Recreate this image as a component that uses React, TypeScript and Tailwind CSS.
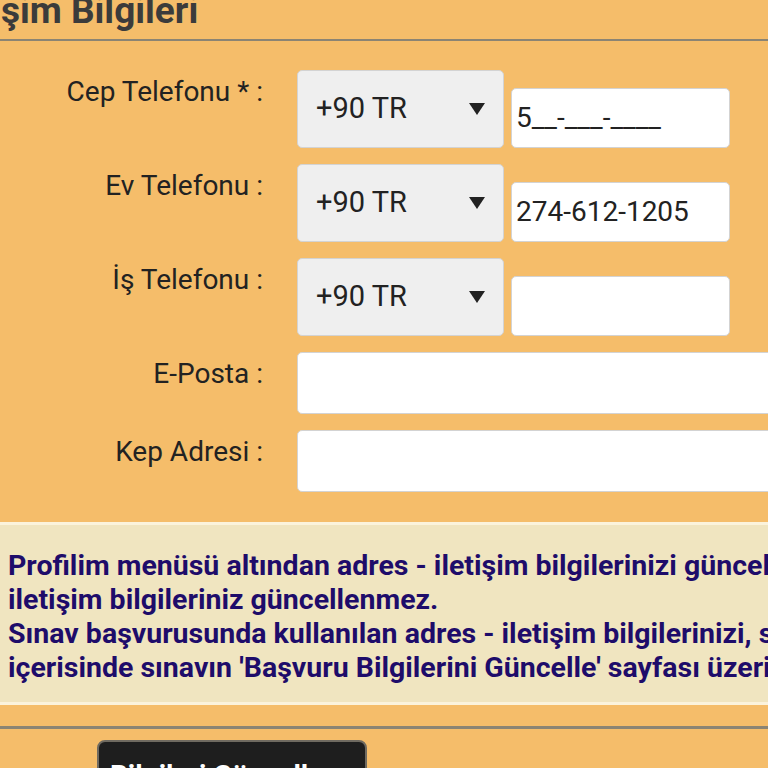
import React from 'react';

const rows = [
  { label: 'Cep Telefonu * :', phone: true, value: '5__-___-____' },
  { label: 'Ev Telefonu :', phone: true, value: '274-612-1205' },
  { label: 'İş Telefonu :', phone: true, value: '' },
  { label: 'E-Posta :', phone: false, value: '' },
  { label: 'Kep Adresi :', phone: false, value: '' },
];

const notice = [
  'Profilim menüsü altından adres - iletişim bilgilerinizi güncellemeniz durumunda sınav başvurusundaki adres -',
  'iletişim bilgileriniz güncellenmez.',
  'Sınav başvurusunda kullanılan adres - iletişim bilgilerinizi, sınav başvurusu ve ücret ödeme işlemleri süresi',
  "içerisinde sınavın 'Başvuru Bilgilerini Güncelle' sayfası üzerinden güncelleyebilirsiniz.",
];

const App = () => {
  return (
    <div className="w-[768px] h-[768px] overflow-hidden bg-[#f5bd6a] font-['Roboto',sans-serif] text-[#222]">
      {/* Header */}
      <div className="h-[39px] flex flex-col">
        <h2 className="-mt-[8px] -ml-[62px] whitespace-nowrap text-[37px] leading-[38px] font-bold text-[#3b3b3b]">
          İletişim Bilgileri
        </h2>
      </div>
      <div className="h-[2px] bg-[#8b8473]" />

      {/* Form */}
      <div className="pt-[29px] flex flex-col gap-[16px]">
        {rows.map((row, i) => (
          <div key={i} className="flex items-start">
            <div className="w-[263px] shrink-0 pt-[6px] text-right text-[28px] leading-[32px] whitespace-nowrap">
              {row.label}
            </div>
            {row.phone ? (
              <div className="ml-[34px] flex items-end">
                <div className="w-[207px] h-[78px] shrink-0 flex items-center justify-between pl-[18px] pr-[18px] bg-[#efefef] border border-[#d3d3d3] rounded-[5px] text-[29px]">
                  <span>+90 TR</span>
                  <svg width="16" height="12" viewBox="0 0 16 12">
                    <polygon points="0,0 16,0 8,12" fill="#222" />
                  </svg>
                </div>
                <div className="ml-[7px] w-[219px] h-[60px] shrink-0 flex items-center pl-[4px] bg-white border border-[#d3d3d3] rounded-[5px] text-[28px] whitespace-nowrap">
                  {row.value}
                </div>
              </div>
            ) : (
              <div className="ml-[34px] w-[500px] h-[62px] shrink-0 bg-white border border-[#d3d3d3] rounded-[5px]" />
            )}
          </div>
        ))}
      </div>

      {/* Notice */}
      <div className="mt-[30px] h-[183px] overflow-hidden bg-[#f0e5c0] border-y-[3px] border-[#fbf3dc] pt-[24px] pl-[8px] font-bold text-[28.5px] leading-[34px] text-[#1e0c6a]">
        {notice.map((line, i) => (
          <div key={i} className="whitespace-nowrap">
            {line}
          </div>
        ))}
      </div>

      <div className="h-[21px]" />
      <div className="h-[3px] bg-[#8b8473]" />

      {/* Button */}
      <div className="pt-[11px] pl-[97px]">
        <button className="w-[270px] h-[60px] bg-[#1e1e1e] border-2 border-[#6f6a60] rounded-[8px] text-white font-bold text-[28px] text-left pl-[11px] pt-[12px] leading-[32px] whitespace-nowrap">
          Bilgileri Güncelle
        </button>
      </div>
    </div>
  );
};

export default App;
